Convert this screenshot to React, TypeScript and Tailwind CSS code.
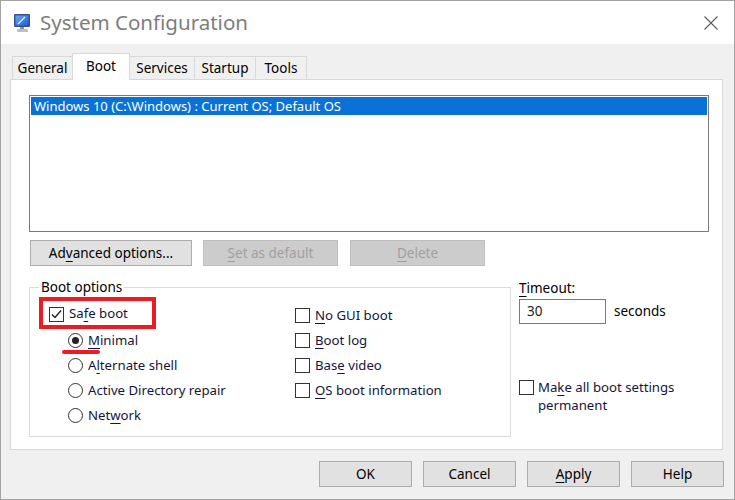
import React from "react";

const U = ({ children }: { children: React.ReactNode }) => (
  <span className="underline underline-offset-[3px] decoration-1">{children}</span>
);

function CheckBox({ checked = false }: { checked?: boolean }) {
  return (
    <span className="w-[15px] h-[15px] border border-[#333333] bg-white flex items-center justify-center shrink-0">
      {checked && (
        <svg width="13" height="13" viewBox="0 0 13 13">
          <path d="M2 6.5 L5 9.5 L11 2.5" fill="none" stroke="#222" strokeWidth="1.4" />
        </svg>
      )}
    </span>
  );
}

function Radio({ checked = false }: { checked?: boolean }) {
  return (
    <span className="w-[15px] h-[15px] rounded-full border border-[#333333] bg-white flex items-center justify-center shrink-0">
      {checked && <span className="w-[7px] h-[7px] rounded-full bg-[#222222]" />}
    </span>
  );
}

function Btn({
  children,
  w,
  disabled = false,
}: {
  children: React.ReactNode;
  w: string;
  disabled?: boolean;
}) {
  return (
    <div
      className={
        "h-[26px] flex items-center justify-center text-[13.5px] border " +
        w +
        (disabled
          ? " bg-[#cccccc] border-[#bfbfbf] text-[#a0a0a0]"
          : " bg-[#e1e1e1] border-[#adadad] text-black")
      }
    >
      {children}
    </div>
  );
}

function Tab({
  label,
  w,
  selected = false,
}: {
  label: string;
  w: string;
  selected?: boolean;
}) {
  return (
    <div
      className={
        "flex items-center justify-center text-[13.5px] text-black border border-[#d9d9d9] -ml-px " +
        w +
        (selected
          ? " h-[27px] bg-white border-b-0 relative z-10 pb-[2px]"
          : " h-[24px] bg-[#f0f0f0] border-b-0")
      }
    >
      {label}
    </div>
  );
}

export default function App() {
  return (
    <div className="w-[735px] h-[500px] bg-[#f0f0f0] border border-[#a3a3a3] flex flex-col font-['Noto_Sans',sans-serif] text-black overflow-hidden">
      {/* Title bar */}
      <div className="h-[43px] bg-white flex items-center pl-[12px] pr-[16px] shrink-0">
        <svg width="19" height="20" viewBox="0 0 19 20" className="mt-[1px]">
          <defs>
            <linearGradient id="scr" x1="0" y1="0" x2="1" y2="1">
              <stop offset="0" stopColor="#6aa8f0" />
              <stop offset="1" stopColor="#1f5fc8" />
            </linearGradient>
          </defs>
          <rect x="1" y="1" width="16" height="13" rx="1" fill="#3b4f8f" />
          <rect x="2.5" y="2.5" width="13" height="10" fill="url(#scr)" />
          <path d="M5 11 L12 4" stroke="#e8f2ff" strokeWidth="1.2" />
          <rect x="7" y="14" width="4" height="2" fill="#8a8f99" />
          <rect x="4" y="16" width="11" height="3" rx="1" fill="#b9bec7" />
        </svg>
        <div className="ml-[8px] text-[20.5px] text-[#7d7d7d] leading-none mb-[1px]">System Configuration</div>
        <div className="flex-1" />
        <svg width="14" height="14" viewBox="0 0 14 14">
          <path d="M0.5 0.5 L13.5 13.5 M13.5 0.5 L0.5 13.5" stroke="#5a5a5a" strokeWidth="1.1" />
        </svg>
      </div>

      {/* Body */}
      <div className="flex-1 flex flex-col pl-[9px] pt-[9px]">
        {/* Tabs */}
        <div className="h-[27px] flex items-end pl-[3px] -mb-px">
          <Tab label="General" w="w-[61px]" />
          <Tab label="Boot" w="w-[58px]" selected />
          <Tab label="Services" w="w-[66px]" />
          <Tab label="Startup" w="w-[62px]" />
          <Tab label="Tools" w="w-[52px]" />
        </div>

        {/* Panel */}
        <div className="w-[713px] h-[371px] bg-white border border-[#d9d9d9] flex flex-col pl-[18px] pt-[15px]">
          {/* Listbox */}
          <div className="w-[680px] h-[137px] border border-[#7a7a7a] bg-white p-[1px]">
            <div className="h-[18px] bg-[#0a72d6] text-white text-[13px] leading-[18px] pl-[3px]">
              Windows 10 (C:\Windows) : Current OS; Default OS
            </div>
          </div>

          {/* Buttons row */}
          <div className="flex mt-[8px] ml-[1px]">
            <Btn w="w-[162px]">
              Ad<U>v</U>anced options...
            </Btn>
            <div className="ml-[11px]">
              <Btn w="w-[135px]" disabled>
                <U>S</U>et as default
              </Btn>
            </div>
            <div className="ml-[12px]">
              <Btn w="w-[135px]" disabled>
                <U>D</U>elete
              </Btn>
            </div>
          </div>

          {/* Options row */}
          <div className="flex mt-[12px]">
            {/* Group box */}
            <div className="relative mt-[9px] w-[482px] h-[150px] border border-[#dcdcdc] flex text-[13.2px] text-[#15153a]">
              <div className="absolute left-[9px] -top-[11px] bg-white px-[2px] text-[13.5px] leading-[20px] text-black">
                Boot options
              </div>

              {/* Left column */}
              <div className="w-[265px] flex flex-col pt-[9px] pl-[9px]">
                <div className="w-[117px] h-[32px] border-4 border-[#ed1c24] flex items-center pl-[6px] pt-[2px]">
                  <CheckBox checked />
                  <span className="ml-[5px] leading-none">
                    Sa<U>f</U>e boot
                  </span>
                </div>
                <div className="relative h-[25px] flex items-center pl-[29px] -mt-[1px]">
                  <Radio checked />
                  <span className="ml-[5px]">
                    <U>M</U>inimal
                  </span>
                  <div className="absolute left-[23px] top-[22px] w-[38px] h-[4px] rounded-full bg-[#ed1c24]" />
                </div>
                <div className="h-[25px] flex items-center pl-[29px]">
                  <Radio />
                  <span className="ml-[5px]">
                    A<U>l</U>ternate shell
                  </span>
                </div>
                <div className="h-[25px] flex items-center pl-[29px]">
                  <Radio />
                  <span className="ml-[5px]">Active Directory repair</span>
                </div>
                <div className="h-[25px] flex items-center pl-[29px]">
                  <Radio />
                  <span className="ml-[5px]">
                    Net<U>w</U>ork
                  </span>
                </div>
              </div>

              {/* Right column */}
              <div className="flex flex-col pt-[15px]">
                <div className="h-[25px] flex items-center">
                  <CheckBox />
                  <span className="ml-[5px]">
                    <U>N</U>o GUI boot
                  </span>
                </div>
                <div className="h-[25px] flex items-center">
                  <CheckBox />
                  <span className="ml-[5px]">
                    <U>B</U>oot log
                  </span>
                </div>
                <div className="h-[25px] flex items-center">
                  <CheckBox />
                  <span className="ml-[5px]">
                    Bas<U>e</U> video
                  </span>
                </div>
                <div className="h-[25px] flex items-center">
                  <CheckBox />
                  <span className="ml-[5px]">
                    <U>O</U>S boot information
                  </span>
                </div>
              </div>
            </div>

            {/* Timeout column */}
            <div className="ml-[8px] flex flex-col text-[13.5px]">
              <div className="h-[20px] leading-[20px]">
                <U>T</U>imeout:
              </div>
              <div className="flex items-center mt-[1px]">
                <div className="w-[87px] h-[25px] border border-[#7a7a7a] bg-white pl-[7px] leading-[23px] text-[#222]">
                  30
                </div>
                <span className="ml-[8px]">seconds</span>
              </div>
              <div className="flex items-start mt-[54px] text-[#15153a] text-[13.2px]">
                <div className="mt-[2px]">
                  <CheckBox />
                </div>
                <div className="ml-[4px] flex flex-col">
                  <div className="h-[17px] leading-[18px]">
                    Ma<U>k</U>e all boot settings
                  </div>
                  <div className="h-[17px] leading-[18px] mt-[1px]">permanent</div>
                </div>
              </div>
            </div>
          </div>
        </div>

        {/* Bottom buttons */}
        <div className="flex justify-end pr-[10px] mt-[11px] gap-[11px]">
          <Btn w="w-[93px]">OK</Btn>
          <Btn w="w-[93px]">Cancel</Btn>
          <Btn w="w-[93px]">
            <U>A</U>pply
          </Btn>
          <Btn w="w-[93px]">Help</Btn>
        </div>
      </div>
    </div>
  );
}
